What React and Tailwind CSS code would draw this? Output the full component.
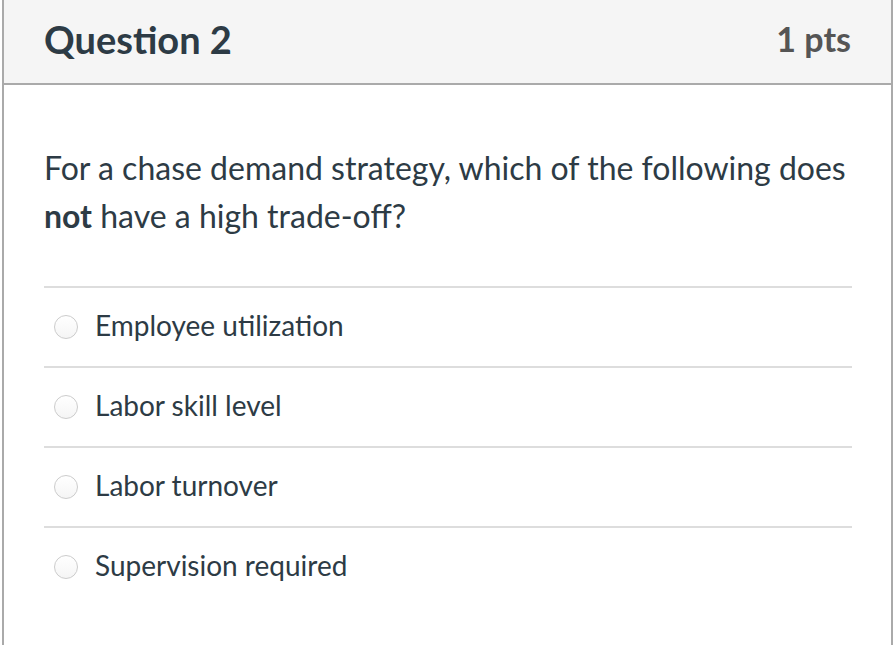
import React from 'react';

const options = [
    'Employee utilization',
    'Labor skill level',
    'Labor turnover',
    'Supervision required',
];

const App = () => {
    return (
        <div className="h-[645px] overflow-hidden bg-white pl-[2px]" style={{ fontFamily: 'Lato, "Open Sans", sans-serif' }}>
            <div className="w-[891px] h-[700px] border-x-2 border-[#aaaaaa]">
                {/* Header */}
                <div className="h-[85px] bg-[#f5f5f5] border-b-2 border-[#aaaaaa] flex items-center justify-between pl-[40px] pr-[40px]">
                    <h2 className="text-[38px] font-bold text-[#2d3b45] leading-none -mt-[6px]">Question 2</h2>
                    <span className="text-[34px] font-bold text-[#555555] leading-none -mt-[6px]">1 pts</span>
                </div>

                {/* Body */}
                <div className="pl-[40px] pr-[39px]">
                    <p className="pt-[59px] text-[32px] leading-[48px] text-[#2d3b45]">
                        For a chase demand strategy, which of the following does <strong className="font-bold">not</strong> have a high trade-off?
                    </p>

                    <div className="mt-[46px]">
                        {options.map((opt) => (
                            <div key={opt} className="h-[80px] border-t-2 border-[#dddddd] flex items-center">
                                <span className="ml-[10px] w-[24px] h-[24px] rounded-full border border-[#cccccc] bg-gradient-to-b from-white to-[#f5f5f5] shrink-0" />
                                <span className="ml-[17px] text-[28px] text-[#2d3b45] leading-none -mt-[4px]">{opt}</span>
                            </div>
                        ))}
                    </div>
                </div>
            </div>
        </div>
    );
};

export default App;
